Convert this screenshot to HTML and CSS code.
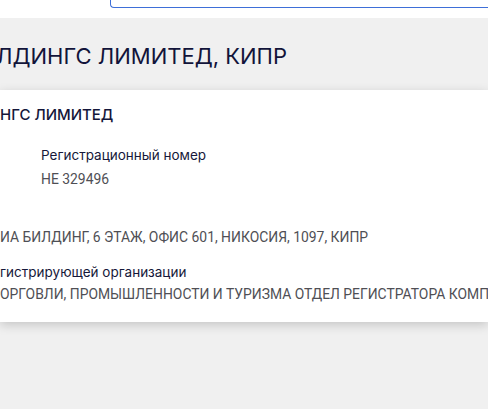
FILE: index.html
```html
<!DOCTYPE html>
<html lang="ru">
<head>
<meta charset="utf-8">
<link rel="stylesheet" href="styles.css">
</head>
<body>
<div class="page">
  <div class="topbar">
    <div class="search"></div>
  </div>
  <div class="band">
    <h1 class="title">ЛДИНГС ЛИМИТЕД, КИПР</h1>
  </div>
  <div class="card">
    <h2 class="name">НГС ЛИМИТЕД</h2>
    <div class="field reg">
      <div class="label">Регистрационный номер</div>
      <div class="value">HE 329496</div>
    </div>
    <div class="field addr">
      <div class="value">ИА БИЛДИНГ, 6 ЭТАЖ, ОФИС 601, НИКОСИЯ, 1097, КИПР</div>
    </div>
    <div class="field org">
      <div class="label">гистрирующей организации</div>
      <div class="value">ОРГОВЛИ, ПРОМЫШЛЕННОСТИ И ТУРИЗМА ОТДЕЛ РЕГИСТРАТОРА КОМПАНИЙ</div>
    </div>
  </div>
</div>
</body>
</html>
```
FILE: styles.css
```css
html, body {
  margin: 0;
  padding: 0;
  background: #f0f0f0;
  overflow: hidden;
}
.page {
  width: 488px;
  height: 409px;
  overflow: hidden;
  font-family: Inter, Roboto, "Liberation Sans", sans-serif;
  color: #14163a;
}
.topbar {
  background: #fff;
  height: 18px;
  padding-left: 110px;
}
.search {
  width: 420px;
  height: 7px;
  border: 1px solid #3e6fd8;
  border-top: none;
  border-right: none;
  border-bottom-left-radius: 4px;
}
.band {
  background: #f0f0f0;
  height: 72px;
  display: flex;
  align-items: center;
  overflow: hidden;
}
.title {
  margin: 0 0 0 -4px;
  font-size: 22px;
  font-weight: 400;
  white-space: nowrap;
  color: #12143a;
  padding-top: 3px;
  line-height: 26px;
}
.card {
  background: #fff;
  height: 232px;
  box-shadow: 0 3px 10px rgba(0, 0, 0, 0.18);
  overflow: hidden;
  padding-top: 15px;
  box-sizing: border-box;
}
.name {
  margin: 0;
  font-size: 15px;
  font-weight: 500;
  white-space: nowrap;
  line-height: 20px;
}
.field {
  white-space: nowrap;
  font-size: 13.5px;
}
.label {
  line-height: 18px;
  color: #16183a;
}
.value {
  font-family: Roboto, "Liberation Sans", sans-serif;
  font-size: 13.9px;
  line-height: 18px;
  color: #4f4f55;
  margin-top: 6px;
}
.reg {
  padding-left: 41px;
  margin-top: 21px;
}
.addr {
  margin-top: 40px;
}
.org {
  margin-top: 17px;
}
.org .value {
  margin-top: 4px;
}
```
